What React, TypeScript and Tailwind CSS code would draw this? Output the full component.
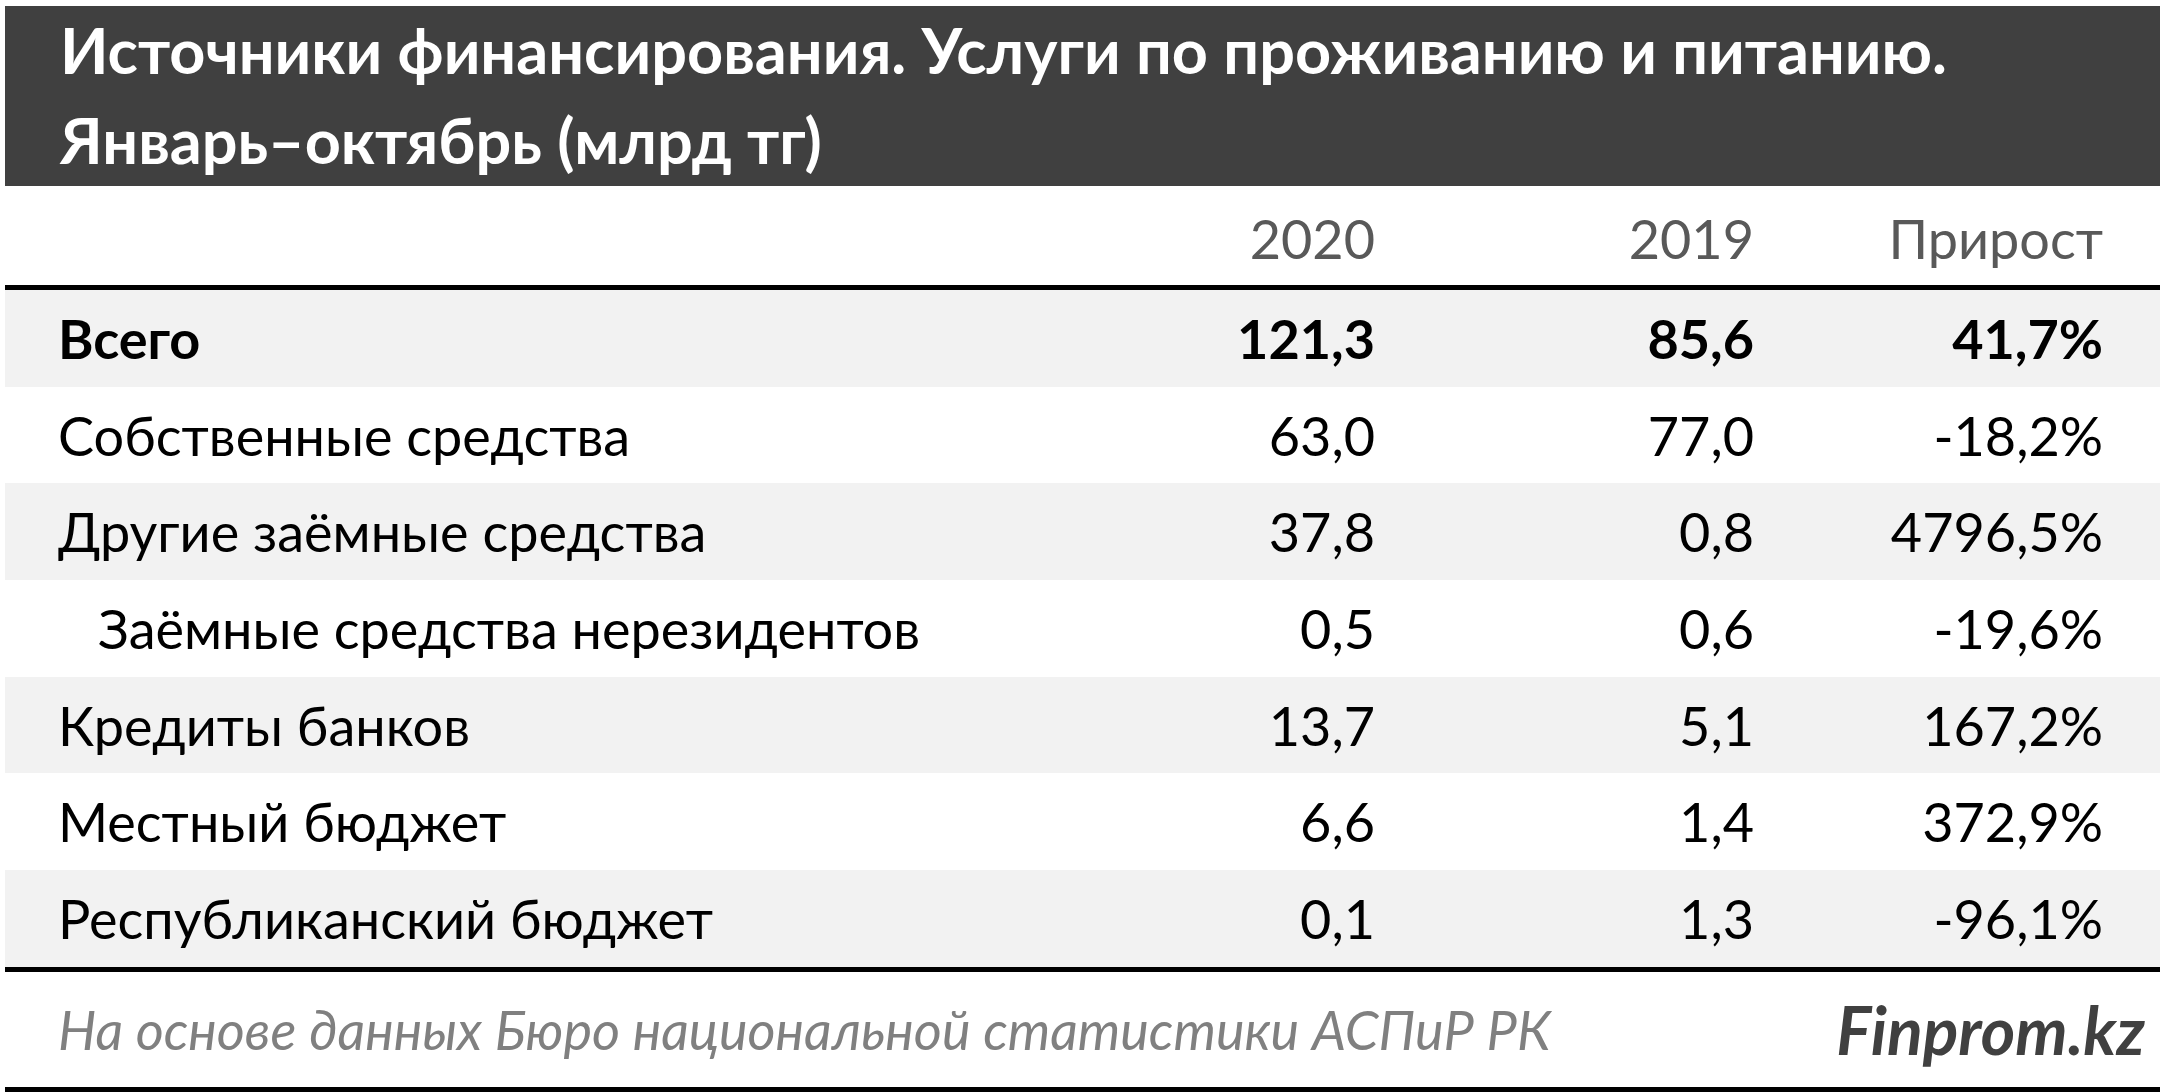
const rows = [
  { label: 'Всего', v2020: '121,3', v2019: '85,6', growth: '41,7%', bold: true },
  { label: 'Собственные средства', v2020: '63,0', v2019: '77,0', growth: '-18,2%' },
  { label: 'Другие заёмные средства', v2020: '37,8', v2019: '0,8', growth: '4796,5%' },
  { label: 'Заёмные средства нерезидентов', v2020: '0,5', v2019: '0,6', growth: '-19,6%', indent: true },
  { label: 'Кредиты банков', v2020: '13,7', v2019: '5,1', growth: '167,2%' },
  { label: 'Местный бюджет', v2020: '6,6', v2019: '1,4', growth: '372,9%' },
  { label: 'Республиканский бюджет', v2020: '0,1', v2019: '1,3', growth: '-96,1%' },
];

export default function App() {
  return (
    <div className="w-[2160px] h-[1092px] bg-white pl-[5px] pt-[6px] font-['Lato','Noto_Sans',sans-serif] overflow-hidden">
      <div className="h-[180px] bg-[#404040] pl-[55px] pt-[4px] text-white font-bold text-[63px]">
        <div className="leading-[80px]">Источники финансирования. Услуги по проживанию и питанию.</div>
        <div className="leading-[80px] mt-[10px]">Январь–октябрь (млрд тг)</div>
      </div>

      <div className="h-[104px] flex items-center pt-[6px] text-[54px] text-[#595959] border-b-[5px] border-black">
        <div className="flex-1" />
        <div className="w-[400px] text-right">2020</div>
        <div className="w-[379px] text-right">2019</div>
        <div className="w-[349px] text-right">Прирост</div>
        <div className="w-[57px]" />
      </div>

      <div>
        {rows.map((row, i) => (
          <div
            key={i}
            className={`h-[96.7px] flex items-center text-[54px] text-black ${i % 2 === 0 ? 'bg-[#f2f2f2]' : 'bg-white'} ${row.bold ? 'font-bold' : ''}`}
          >
            <div className={`flex-1 ${row.indent ? 'pl-[93px]' : 'pl-[53px]'}`}>{row.label}</div>
            <div className="w-[400px] text-right">{row.v2020}</div>
            <div className="w-[379px] text-right">{row.v2019}</div>
            <div className="w-[349px] text-right">{row.growth}</div>
            <div className="w-[57px]" />
          </div>
        ))}
      </div>

      <div className="h-[125px] flex items-center border-y-[5px] border-black">
        <div className="flex-1 pl-[53px] italic text-[54px] text-[#808080]">
          На основе данных Бюро национальной статистики АСПиР РК
        </div>
        <div className="pr-[15px] italic font-bold text-[66px] text-[#404040]">Finprom.kz</div>
      </div>
    </div>
  );
}
